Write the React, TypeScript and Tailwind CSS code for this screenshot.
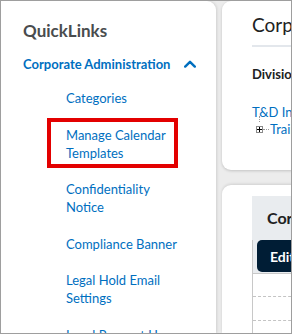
import React from "react";

const subLinks: string[][] = [
  ["Categories"],
  ["Manage Calendar", "Templates"],
  ["Confidentiality", "Notice"],
  ["Compliance Banner"],
  ["Legal Hold Email", "Settings"],
  ["Legal Request User", "Settings"],
];

function ChevronUp() {
  return (
    <svg width="12" height="8" viewBox="0 0 12 8" className="text-[#006fbf]">
      <path d="M1.2 6.6 L6 1.8 L10.8 6.6" fill="none" stroke="currentColor" strokeWidth="2.4" strokeLinecap="round" strokeLinejoin="round" />
    </svg>
  );
}

function QuickLinksPanel() {
  return (
    <div className="relative w-[215px] shrink-0 bg-white rounded-tr-[9px] shadow-[1px_0_3px_rgba(0,0,0,0.12)] flex flex-col">
      <h2 className="pl-[22px] pt-[20px] text-[17px] leading-[20px] font-bold text-[#494c4e]">QuickLinks</h2>
      <div className="ml-[9px] mr-[8px] mt-[5px] h-px bg-[#a9bac9]" />
      <div className="mt-[9px] pl-[22px] pr-[20px] flex items-center justify-between">
        <span className="text-[13px] leading-[18px] font-bold text-[#006fbf]">Corporate Administration</span>
        <ChevronUp />
      </div>
      <ul className="mt-[16px] pl-[65px] flex flex-col gap-[18.6px]">
        {subLinks.map((lines) => (
          <li key={lines.join(" ")} className="text-[13px] leading-[18px] text-[#006fbf]">
            {lines.map((l) => (
              <div key={l}>{l}</div>
            ))}
          </li>
        ))}
      </ul>
      {/* annotation box */}
      <div className="absolute left-[46px] top-[117px] w-[131px] h-[50px] border-[4px] border-[#e30000]" />
    </div>
  );
}

function TreeNode() {
  return (
    <div className="relative flex items-center h-[16px] pl-[4px]">
      <div className="absolute left-[7px] top-[-5px] h-[6px] border-l border-dotted border-[#999]" />
      <div className="relative w-[7px] h-[7px] border border-[#8a8a8a] bg-white flex items-center justify-center">
        <div className="absolute w-[5px] h-px bg-black" />
        <div className="absolute h-[5px] w-px bg-black" />
      </div>
      <div className="w-[6px] border-t border-dotted border-[#999]" />
      <span className="ml-[1px] text-[13px] leading-[16px] text-[#006fbf]">Training</span>
    </div>
  );
}

function RightColumn() {
  return (
    <div className="flex flex-col gap-[15px] ml-[6px] w-[300px] shrink-0">
      <div className="h-[169px] shrink-0 bg-white rounded-l-[9px] shadow-[0_1px_3px_rgba(0,0,0,0.18)] pl-[30px] pt-[12px]">
        <div className="text-[19px] leading-[24px] text-[#202122] whitespace-nowrap">Corporate Administration</div>
        <div className="mt-[8px] h-[2px] bg-[#e3e7ec]" />
        <div className="mt-[19px] text-[13px] leading-[16px] font-bold text-[#202122] whitespace-nowrap">Division</div>
        <div className="mt-[21px] text-[13px] leading-[18px] text-[#006fbf] whitespace-nowrap">T&amp;D Internal</div>
        <TreeNode />
      </div>
      <div className="flex-1 min-h-0 bg-white rounded-tl-[9px] shadow-[0_-1px_3px_rgba(0,0,0,0.12)] pl-[30px] pt-[11px]">
        <div className="h-[44px] bg-[#e9ecef] flex items-center pl-[15px]">
          <span className="text-[16px] font-bold text-[#202122] whitespace-nowrap">Corporate Links</span>
        </div>
        <div className="border-l border-[#c8c8c8]">
          <div className="bg-[#e9ecef] pl-[4px] pb-[1px]">
            <div className="h-[32px] w-[80px] bg-[#001d35] rounded-l-[5px] flex items-center pl-[13px]">
              <span className="text-[14px] text-white font-bold">Edit</span>
            </div>
          </div>
          <div className="h-px bg-[#c8c8c8]" />
          <div className="h-[23px] border-b border-dashed border-[#c4c4c4]" />
          <div className="h-[24px] border-b border-dashed border-[#c4c4c4]" />
          <div className="h-[20px]" />
        </div>
      </div>
    </div>
  );
}

export default function App() {
  return (
    <div className="w-[292px] h-[334px] overflow-hidden border border-[#9e9e9e] bg-[#ececec] font-['Lato',sans-serif] flex">
      <QuickLinksPanel />
      <RightColumn />
    </div>
  );
}
